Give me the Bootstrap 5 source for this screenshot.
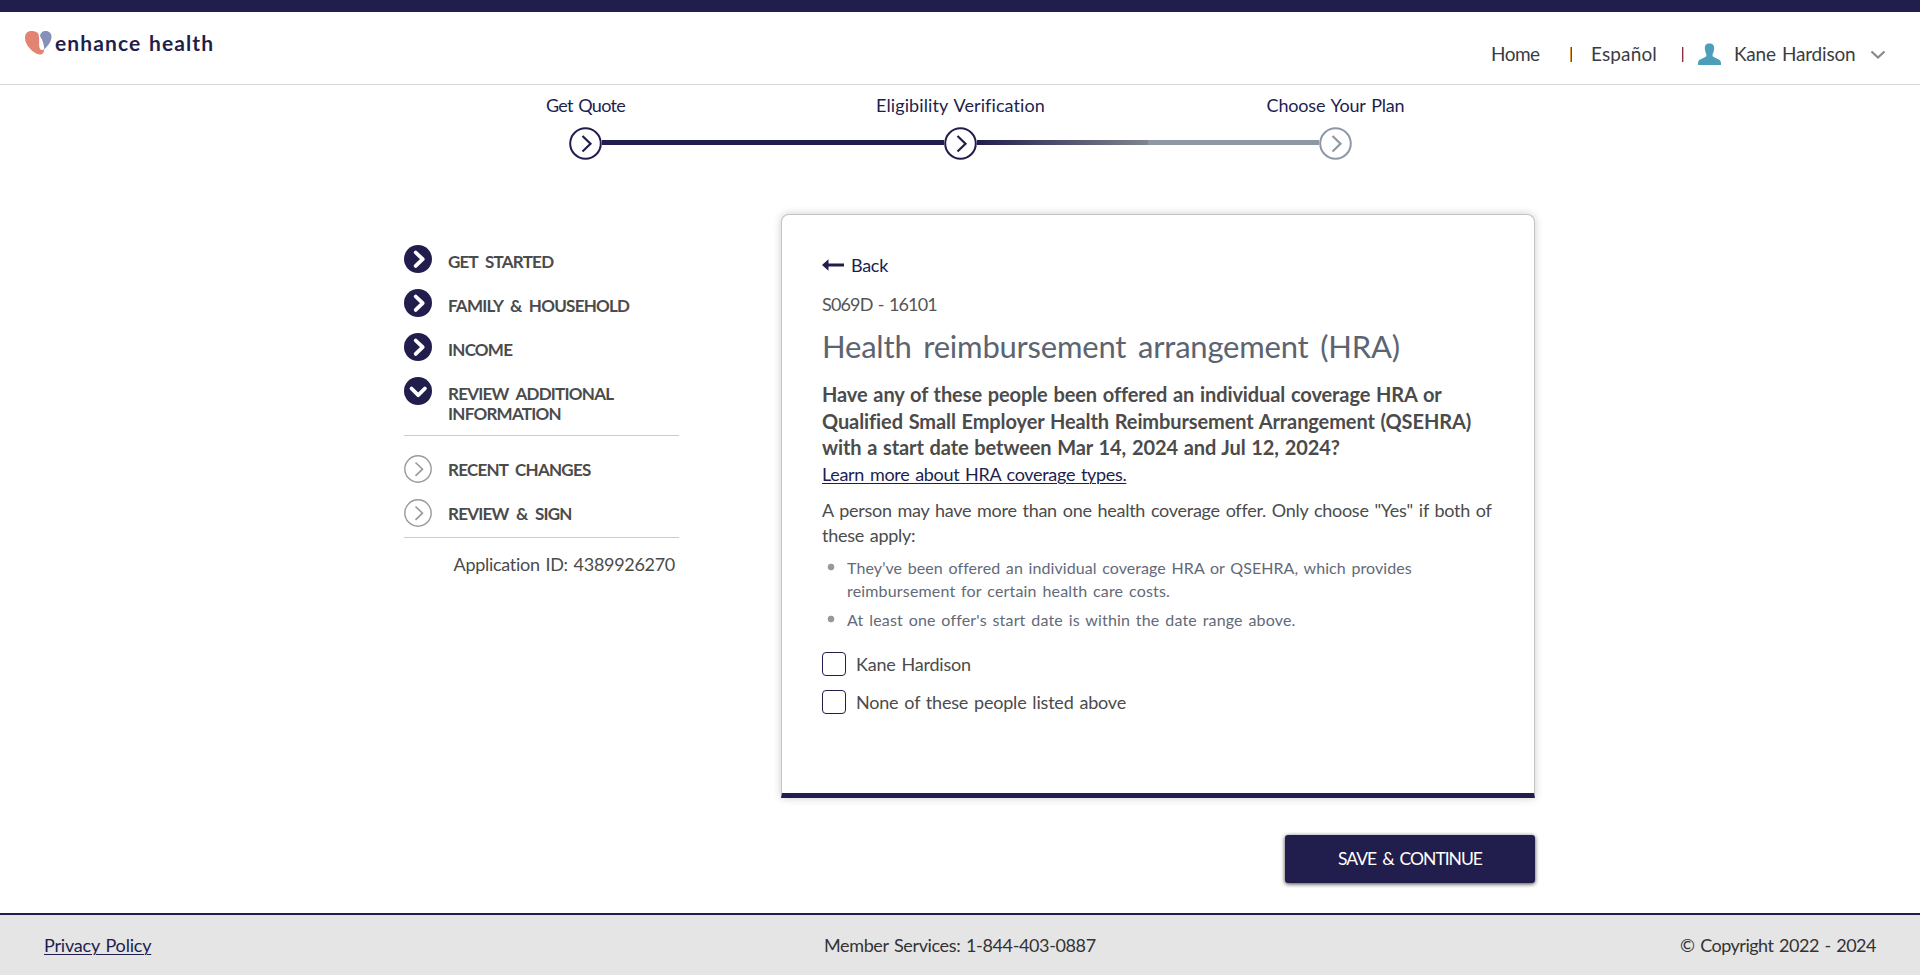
<!DOCTYPE html>
<html lang="en">
<head>
<meta charset="utf-8">
<meta name="viewport" content="width=device-width, initial-scale=1">
<title>Enhance Health - Health reimbursement arrangement</title>
<link href="https://cdn.jsdelivr.net/npm/bootstrap@5.3.0/dist/css/bootstrap.min.css" rel="stylesheet">
<style>
:root{--navy:#211e4e;--ink:#4b4b4b}
body{font-family:Lato,"Open Sans",sans-serif;font-size:18px;line-height:24px;letter-spacing:-.2px;word-spacing:1.5px;color:var(--ink);min-height:975px;overflow-x:hidden}
a{color:var(--navy);text-underline-offset:2px;text-decoration-thickness:1px}
.topbar{height:12px;background:var(--navy)}
.site-header{height:73px;border-bottom:1px solid #d8d8d8;padding:0 35px 0 25px}
.brand{height:26px;margin-top:18px;color:var(--navy);gap:3px}
.brand-name{font-weight:700;font-size:21px;line-height:26px;letter-spacing:1.1px}
.site-nav{display:grid;grid-template-columns:78px 23px 90px 16px 36px 137px 14px;align-items:center;height:26px;margin-top:29px;font-size:19px;color:#3b3b44;white-space:nowrap}
.site-nav .home{letter-spacing:-.5px}
.site-nav .lang{letter-spacing:.14px;margin-left:-1px}
.sep{width:2px;height:15px;margin-left:-1px}
.sep-a{background:linear-gradient(90deg,#d99a3c 50%,#5b4a70 50%);margin-left:1px}
.sep-b{background:linear-gradient(90deg,#8b3038 50%,#a9bde0 50%);margin-left:0}
.steps{width:1125px;height:83px;display:grid;grid-template-columns:repeat(3,375px);margin:0 auto;padding-left:.5px;color:var(--navy);text-align:center}
.step-item{padding-top:7px}
.step-label{line-height:26px}
.ls-tight{letter-spacing:-.7px}
.ls-open{letter-spacing:.1px}
.step-track{height:33px;margin-top:9px;display:grid;grid-template-columns:1fr 33px 1fr;align-items:center}
.step-track i{height:5px;margin-top:-2px}
.done{background:var(--navy)}
.half{background:linear-gradient(90deg,#211e4e,#7f858f)}
.todo{background:#8d98a4}
.page-body{margin:46px 0 0 404px}
.side{width:275px;margin-top:31px}
.side-item{height:44px;display:flex;gap:16px;font-weight:700;font-size:17px;line-height:20px;letter-spacing:-.75px;word-spacing:4px}
.side-item svg{flex:none}
.side-item span{padding-top:7px}
.side-group{height:191px;border-bottom:1px solid #ccc}
.side-next{height:102px;padding-top:19px}
.side-next span{padding-top:5px}
.app-id{letter-spacing:-.3px;text-align:right;padding:14px 4px 0 0}
.panel{width:754px;height:584px;margin-left:102px;padding:38px 40px 0;border:1px solid #c4c4c4;border-bottom:5px solid var(--navy);border-radius:8px 8px 0 0;box-shadow:0 0 8px rgba(0,0,0,.2);background:#fff}
.back-link{height:24px;gap:7px;text-decoration:none;letter-spacing:-.3px}
.screen-code{letter-spacing:-.85px;margin-top:15px;color:#555}
.panel h1{font-size:31px;line-height:38px;margin:11px 0 0;color:#5b6470;letter-spacing:-.2px;word-spacing:4px;font-weight:400}
.question{font-weight:700;font-size:20px;line-height:26.5px;letter-spacing:-.1px;word-spacing:1px;margin:16px 0 0}
.learn{display:block;line-height:24px;letter-spacing:-.31px;margin-top:1px}
.intro{line-height:25px;letter-spacing:-.27px;margin:12px 0 0;white-space:nowrap}
.rules{list-style:none;padding:0;margin:8px 0 0;font-size:16px;line-height:23px;color:#636978}
.rules li{padding-left:25px;margin-bottom:6px;letter-spacing:.17px;background:radial-gradient(circle at 9px 11px,#999 3px,transparent 3.7px);white-space:nowrap}
.rules .first-line{letter-spacing:.07px}
.choices{padding-top:8px}
.choice{display:flex;align-items:center;gap:10px;height:38px}
.choice .form-check-input{width:24px;height:24px;margin:0;border:1px solid var(--navy);border-radius:4px}
.btn-save{width:250px;height:48px;background:var(--navy);color:#fff;border:0;border-radius:3px;font-size:17.5px;letter-spacing:-1px;word-spacing:2.5px;box-shadow:0 1px 4px rgba(0,0,0,.75);margin-top:37px;padding:0}
.site-footer{height:62px;border-top:2px solid var(--navy);background:#e5e5e5;color:#333;padding:0 44px;margin-top:30px;display:grid;grid-template-columns:780px 1fr auto;align-items:center}
.member{letter-spacing:-.37px}
.copyright{letter-spacing:-.5px}
</style>
</head>
<body class="d-flex flex-column bg-white">
<svg width="0" height="0" class="position-absolute" aria-hidden="true">
<symbol id="ring" viewBox="0 0 33 33"><circle cx="16.5" cy="16.5" r="15.3" fill="#fff" stroke="currentColor" stroke-width="2"/><path d="M13.5 9l8 7.7-8 7.8" fill="none" stroke="currentColor" stroke-width="2.2"/></symbol>
<symbol id="solid" viewBox="0 0 28 28"><circle cx="14" cy="14" r="14" fill="#211e4e"/><path d="M11.700 7.500l7 6.700-7 6.700" fill="none" stroke="#fff" stroke-width="3.800" stroke-linecap="round" stroke-linejoin="round"/></symbol>
<symbol id="open" viewBox="0 0 28 28"><circle cx="14" cy="14" r="14" fill="#211e4e"/><path d="M7.500 11.500l6.700 6.700 6.700-6.700" fill="none" stroke="#fff" stroke-width="3.800" stroke-linecap="round" stroke-linejoin="round"/></symbol>
<symbol id="todo" viewBox="0 0 28 28"><circle cx="14" cy="14" r="13.200" fill="#fff" stroke="#999" stroke-width="1.400"/><path d="M11.500 7.500l7 6.700-7 6.700" fill="none" stroke="#999" stroke-width="1.600"/></symbol>
</svg>
<div class="topbar"></div>
<header class="site-header d-flex justify-content-between align-items-start">
  <div class="brand d-flex">
    <svg width="27" height="26" viewBox="0 0 27 26"><path d="M13.700 5C13 2 10 1 6.500 1 2.500 1 0 3.500 0 8c0 7 8 15 13.500 16.300 4 .9 5.800-1.500 5.500-5.300-1.200 1.700-4 1.600-4.700-2-.6-3 .4-7.500-.6-12z" fill="#e38371"/><path d="M15 6c.4-3 2-5 5.500-5C24.500 1 26.500 3.500 26.500 7c0 4.500-3.500 8.500-7.200 12.500-.2-5-1.600-9-4.300-13.500z" fill="#8790b8"/></svg>
    <span class="brand-name">enhance health</span>
  </div>
  <nav class="site-nav">
    <span class="home">Home</span><i class="sep sep-a"></i><span class="lang">Español</span><i class="sep sep-b"></i>
    <svg width="23" height="23" viewBox="0 0 23 23"><path d="M11.500 .5c3.400 0 5 2 4.600 5.700-.2 2.600-1.600 4.600-1.600 6.300 0 2.700 8.500 2.500 8.500 7.500V22H0v-2c0-5 8.500-4.800 8.500-7.500 0-1.700-1.400-3.700-1.600-6.300C6.500 2.500 8.100 .5 11.500 .5z" fill="#4b9fba"/></svg>
    <span>Kane Hardison</span>
    <svg width="14" height="10" viewBox="0 0 14 10" style="overflow:visible"><path d="M.5 2.500l6.500 6 6.500-6" fill="none" stroke="#888" stroke-width="2.200"/></svg>
  </nav>
</header>
<section class="steps">
  <div class="step-item"><div class="step-label ls-tight">Get Quote</div><div class="step-track"><b></b><svg width="33" height="33"><use href="#ring"/></svg><i class="done"></i></div></div>
  <div class="step-item"><div class="step-label ls-open">Eligibility Verification</div><div class="step-track"><i class="done"></i><svg width="33" height="33"><use href="#ring"/></svg><i class="half"></i></div></div>
  <div class="step-item"><div class="step-label">Choose Your Plan</div><div class="step-track"><i class="todo"></i><svg width="33" height="33" color="#8d98a4"><use href="#ring"/></svg><b></b></div></div>
</section>
<main class="page-body">
  <div class="d-flex align-items-start">
    <aside class="side">
      <div class="side-group">
        <div class="side-item"><svg width="28" height="28"><use href="#solid"/></svg><span>GET STARTED</span></div>
        <div class="side-item"><svg width="28" height="28"><use href="#solid"/></svg><span>FAMILY &amp; HOUSEHOLD</span></div>
        <div class="side-item"><svg width="28" height="28"><use href="#solid"/></svg><span>INCOME</span></div>
        <div class="side-item"><svg width="28" height="28"><use href="#open"/></svg><span>REVIEW ADDITIONAL<br>INFORMATION</span></div>
      </div>
      <div class="side-group side-next">
        <div class="side-item"><svg width="28" height="28"><use href="#todo"/></svg><span>RECENT CHANGES</span></div>
        <div class="side-item"><svg width="28" height="28"><use href="#todo"/></svg><span>REVIEW &amp; SIGN</span></div>
      </div>
      <div class="app-id">Application ID: 4389926270</div>
    </aside>
    <div>
      <section class="panel">
        <a href="#" class="back-link d-flex align-items-center"><svg width="22" height="12" viewBox="0 0 22 12"><path d="M0 6l6.500-5.700V4.600H22v2.800H6.500v4.300z" fill="#211e4e"/></svg><span>Back</span></a>
        <div class="screen-code">S069D - 16101</div>
        <h1>Health reimbursement arrangement (HRA)</h1>
        <p class="question">Have any of these people been offered an individual coverage HRA or<br>Qualified Small Employer Health Reimbursement Arrangement (QSEHRA)<br>with a start date between Mar 14, 2024 and Jul 12, 2024?</p>
        <a href="#" class="learn">Learn more about HRA coverage types.</a>
        <p class="intro">A person may have more than one health coverage offer. Only choose "Yes" if both of<br>these apply:</p>
        <ul class="rules"><li><span class="first-line">They’ve been offered an individual coverage HRA or QSEHRA, which provides</span><br>reimbursement for certain health care costs.</li><li>At least one offer's start date is within the date range above.</li></ul>
        <div class="choices">
          <label class="choice"><input class="form-check-input" type="checkbox"><span>Kane Hardison</span></label>
          <label class="choice"><input class="form-check-input" type="checkbox"><span>None of these people listed above</span></label>
        </div>
      </section>
      <div class="text-end"><button class="btn btn-save" type="button">SAVE &amp; CONTINUE</button></div>
    </div>
  </div>
</main>
<footer class="site-footer"><a href="#">Privacy Policy</a><span class="member">Member Services: 1-844-403-0887</span><span class="copyright">© Copyright 2022 - 2024</span></footer>
<script src="https://cdn.jsdelivr.net/npm/bootstrap@5.3.0/dist/js/bootstrap.bundle.min.js"></script>
</body>
</html>
